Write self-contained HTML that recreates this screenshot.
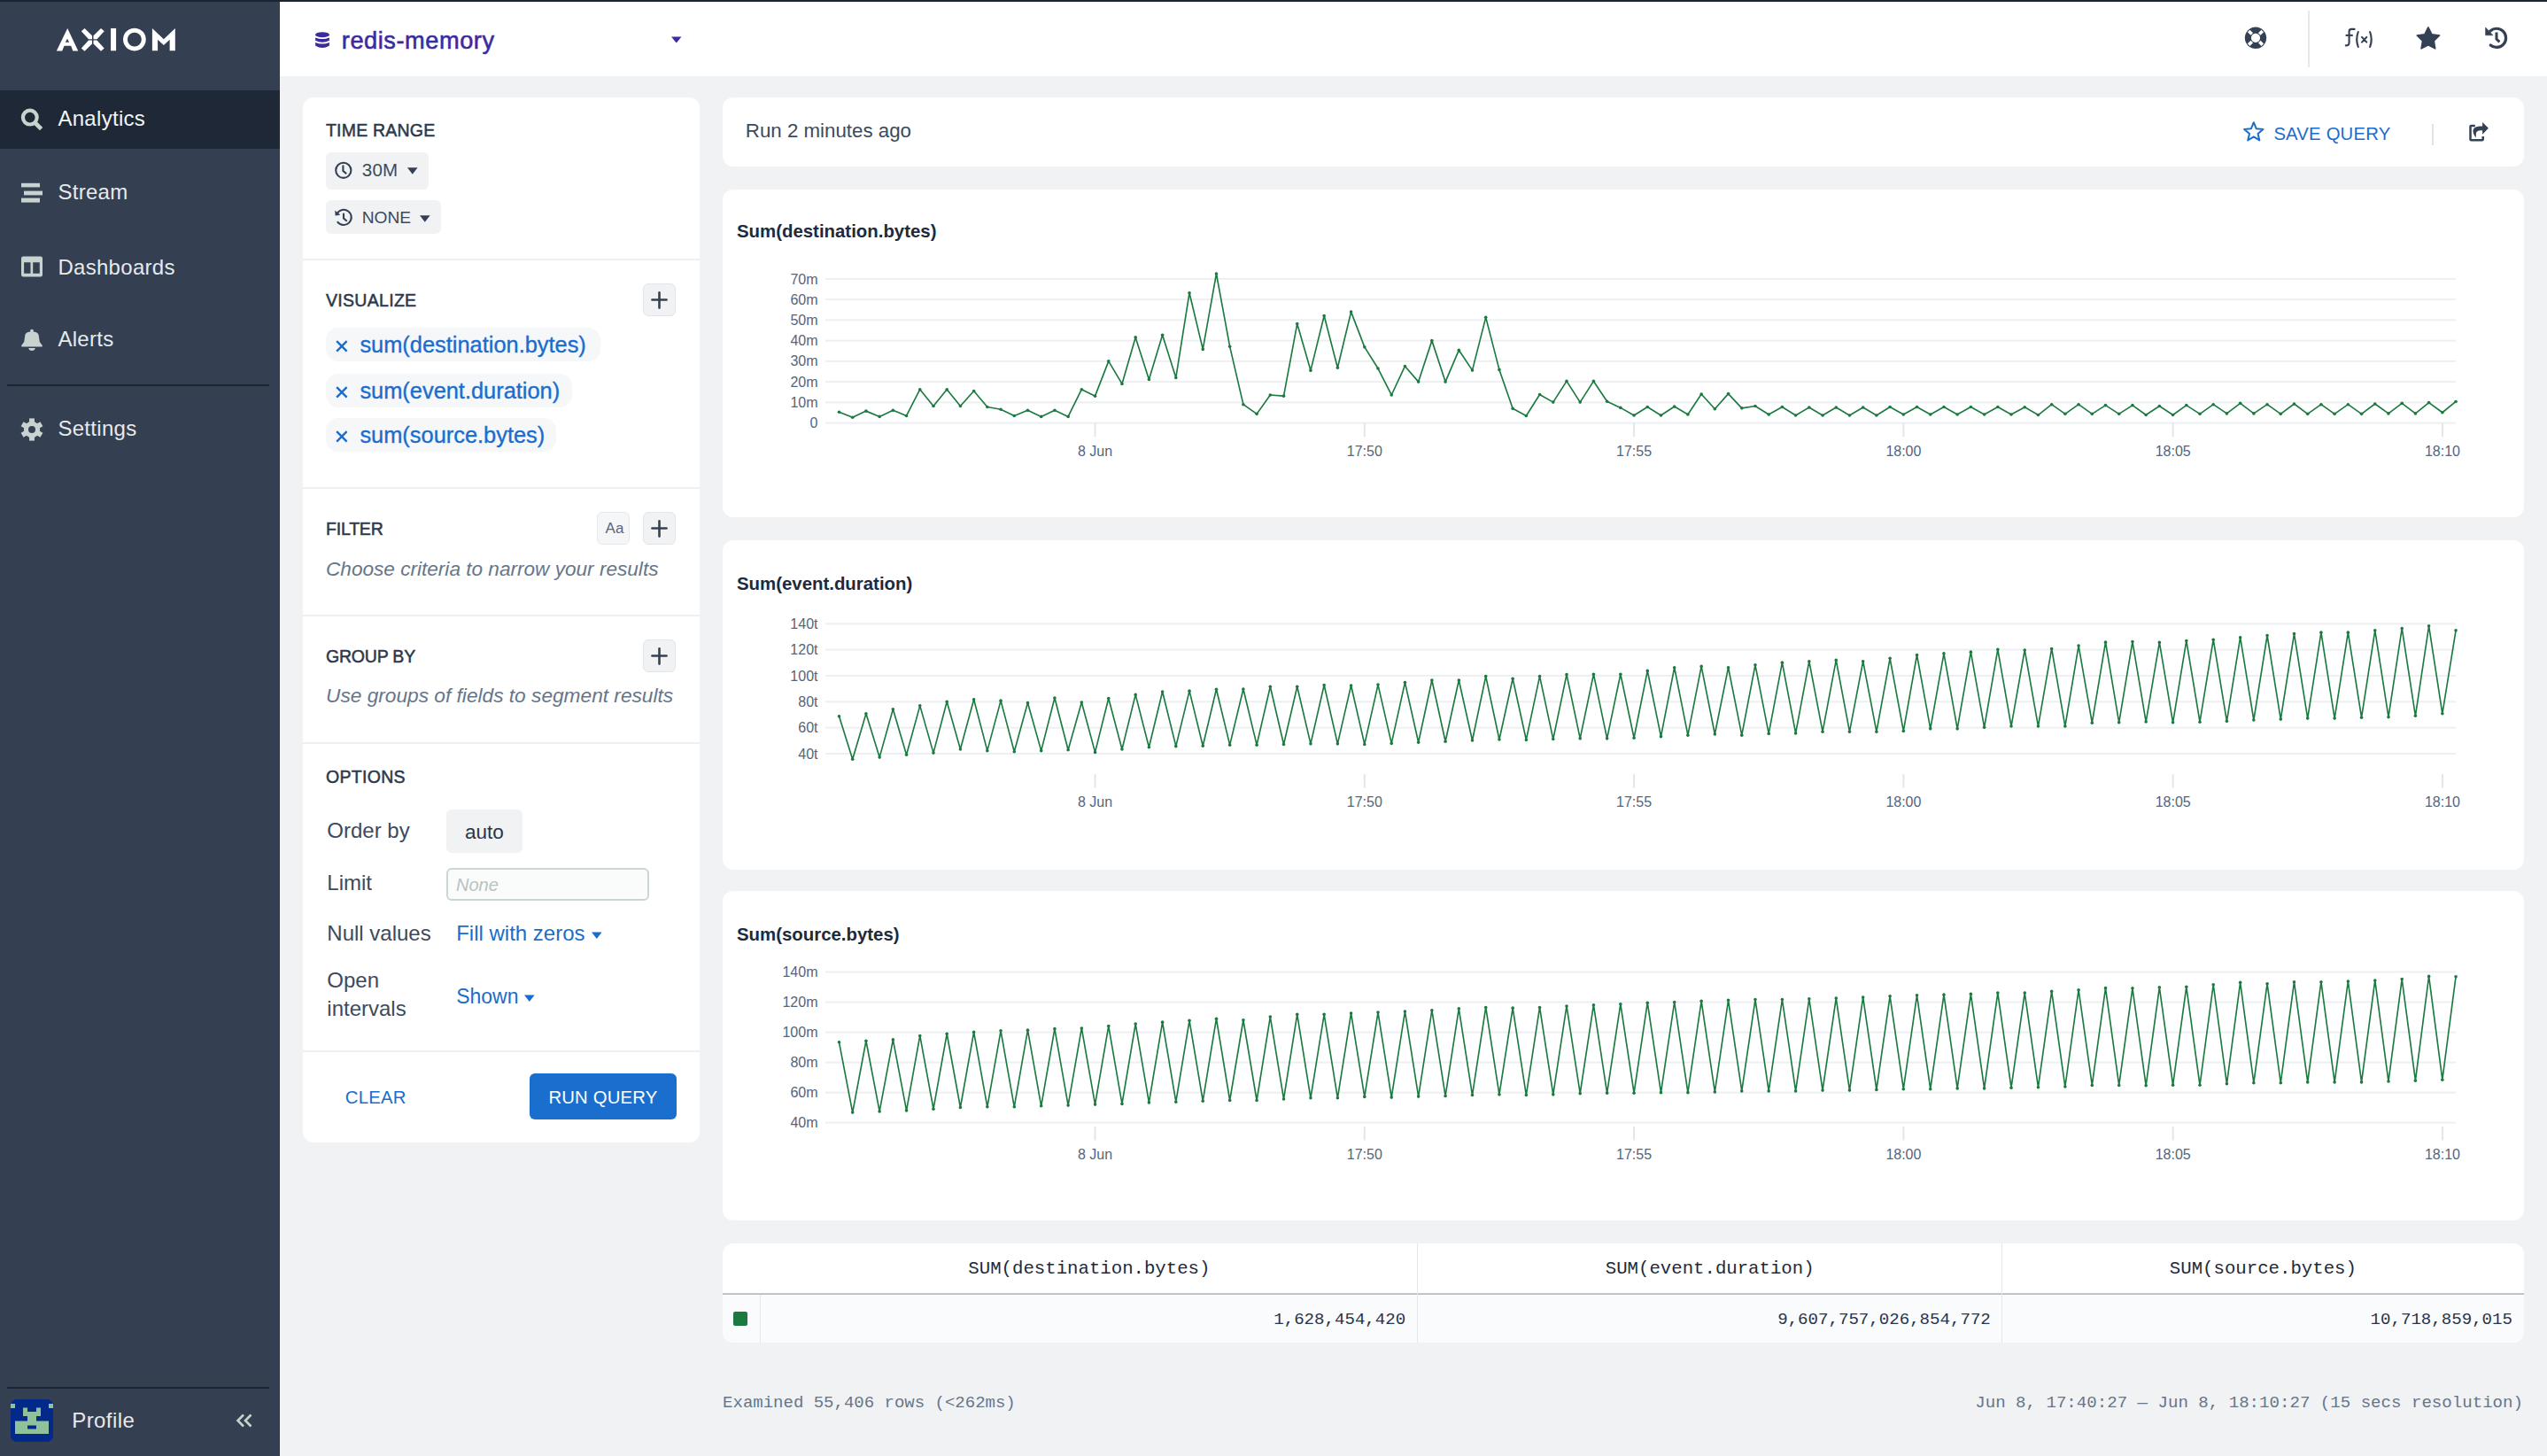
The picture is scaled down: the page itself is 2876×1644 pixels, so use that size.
<!DOCTYPE html><html><head><meta charset="utf-8"><style>
html,body{margin:0;padding:0;}body{width:2876px;height:1644px;position:relative;overflow:hidden;background:#f1f2f4;font-family:'Liberation Sans', sans-serif;}
.t{position:absolute;white-space:pre;}.r{position:absolute;}svg{position:absolute;overflow:visible;}
</style></head><body>
<div class="r" style="left:0px;top:0px;width:316px;height:1644px;background:#343f52;"></div>
<div class="r" style="left:0px;top:0px;width:2876px;height:2px;background:#1c2431;"></div>
<svg style="left:55px;top:25px" width="150" height="40" viewBox="0 0 2547 679"><g fill="#ffffff"><path d="M150,550 L360,118 L565,550 L463,550 L428,452 L298,452 L258,550 Z M320,385 L356,318 L393,385 Z" fill-rule="evenodd"/><path d="M625,175 L688,118 L832,258 L832,325 L765,325 Z"/><path d="M1065,175 L1002,118 L858,258 L858,325 L925,325 Z"/><path d="M625,500 L688,557 L832,418 L832,350 L765,350 Z"/><path d="M1065,500 L1002,557 L858,418 L858,350 L925,350 Z"/><rect x="1190" y="118" width="102" height="430"/><path d="M1645,113 A219,219 0 1,0 1645.1,113 Z M1645,198 A134,134 0 1,1 1644.9,198 Z" fill-rule="evenodd"/><path d="M1985,548 L1985,120 L2205,325 L2425,120 L2425,548 L2320,548 L2320,335 L2205,440 L2090,335 L2090,548 Z"/></g></svg>
<div class="r" style="left:0px;top:102px;width:316px;height:66px;background:#1f2836;"></div>
<svg style="left:24px;top:122px" width="26" height="27" viewBox="0 0 26 27"><circle cx="9.8" cy="10.6" r="7.9" fill="none" stroke="#c8d2cf" stroke-width="4.2"/><path d="M15.2,16.2 L22.6,23.6" stroke="#c8d2cf" stroke-width="4.8"/></svg>
<div class="t" style="left:65.40px;top:120.57px;font-size:24px;line-height:26.81px;color:#f3f5f6;font-family:'Liberation Sans', sans-serif;letter-spacing:0.3px;">Analytics</div>
<svg style="left:24px;top:206px" width="25" height="24" viewBox="0 0 25 24"><rect x="0" y="0.8" width="21" height="4.6" fill="#c8d2cf"/><rect x="3" y="9.6" width="21" height="4.8" fill="#c8d2cf"/><rect x="0" y="17.6" width="21" height="5.0" fill="#c8d2cf"/></svg>
<div class="t" style="left:65.40px;top:204.27px;font-size:24px;line-height:26.81px;color:#e6eaec;font-family:'Liberation Sans', sans-serif;letter-spacing:0.3px;">Stream</div>
<svg style="left:24px;top:289px" width="25" height="25" viewBox="0 0 25 25"><path d="M2.2,0.6 L21.8,0.6 Q24,0.6 24,2.8 L24,21.2 Q24,23.4 21.8,23.4 L2.2,23.4 Q0,23.4 0,21.2 L0,2.8 Q0,0.6 2.2,0.6 Z M3.1,7.2 L3.1,19.8 L10.5,19.8 L10.5,7.2 Z M13.2,7.2 L13.2,19.8 L20.8,19.8 L20.8,7.2 Z" fill="#c8d2cf" fill-rule="evenodd"/></svg>
<div class="t" style="left:65.40px;top:288.67px;font-size:24px;line-height:26.81px;color:#e6eaec;font-family:'Liberation Sans', sans-serif;letter-spacing:0.3px;">Dashboards</div>
<svg style="left:24px;top:371px" width="25" height="26" viewBox="0 0 25 26"><circle cx="12" cy="2.6" r="1.9" fill="#c8d2cf"/><path d="M4.2,8.2 C4.4,5 7.6,3.6 12,3.6 C16.4,3.6 19.6,5 19.8,8.2 L20.8,14.9 L23.9,19.2 Q24.2,20.4 23,20.4 L1,20.4 Q-0.2,20.4 0.1,19.2 L3.2,14.9 Z" fill="#c8d2cf"/><path d="M8.3,22 L15.7,22 C15.7,23.8 14,25 12,25 C10,25 8.3,23.8 8.3,22 Z" fill="#c8d2cf"/></svg>
<div class="t" style="left:65.40px;top:370.37px;font-size:24px;line-height:26.81px;color:#e6eaec;font-family:'Liberation Sans', sans-serif;letter-spacing:0.3px;">Alerts</div>
<div class="r" style="left:8px;top:434px;width:296px;height:2px;background:#1d2532;"></div>
<svg style="left:24px;top:472px" width="25" height="26" viewBox="0 0 25 26"><g fill="#c8d2cf"><circle cx="12" cy="13" r="9.2"/><rect x="9.05" y="0.4" width="5.9" height="7" transform="rotate(0 12 13)"/><rect x="9.05" y="0.4" width="5.9" height="7" transform="rotate(60 12 13)"/><rect x="9.05" y="0.4" width="5.9" height="7" transform="rotate(120 12 13)"/><rect x="9.05" y="0.4" width="5.9" height="7" transform="rotate(180 12 13)"/><rect x="9.05" y="0.4" width="5.9" height="7" transform="rotate(240 12 13)"/><rect x="9.05" y="0.4" width="5.9" height="7" transform="rotate(300 12 13)"/></g><circle cx="12" cy="13" r="4.0" fill="#343f52"/></svg>
<div class="t" style="left:65.40px;top:470.97px;font-size:24px;line-height:26.81px;color:#e6eaec;font-family:'Liberation Sans', sans-serif;letter-spacing:0.3px;">Settings</div>
<div class="r" style="left:8px;top:1566px;width:296px;height:2px;background:#1d2532;"></div>
<svg style="left:12px;top:1580px" width="48" height="48" viewBox="0 0 48 48"><rect x="0" y="0" width="48" height="48" rx="7" fill="#032a8a"/><g fill="#8fc29a"><rect x="0" y="5" width="5" height="5"/><rect x="43" y="5" width="5" height="5"/><rect x="14" y="9.5" width="5" height="5"/><rect x="29" y="9.5" width="5" height="5"/><rect x="14" y="14" width="20" height="5"/><rect x="19" y="19" width="10" height="6"/><rect x="5" y="24.5" width="38" height="14.5"/></g><rect x="19" y="29.5" width="10" height="4" fill="#032a8a"/></svg>
<div class="t" style="left:81.30px;top:1591.07px;font-size:24px;line-height:26.81px;color:#e6eaec;font-family:'Liberation Sans', sans-serif;letter-spacing:0.4px;">Profile</div>
<svg style="left:266px;top:1596px" width="20" height="16" viewBox="0 0 20 16"><path d="M9,1.5 L2.5,8 L9,14.5 M17.5,1.5 L11,8 L17.5,14.5" fill="none" stroke="#c8d2cf" stroke-width="2.6"/></svg>
<div class="r" style="left:316px;top:2px;width:2560px;height:84px;background:#ffffff;"></div>
<svg style="left:355px;top:35px" width="18" height="20" viewBox="0 0 18 20"><g fill="#3a2b9e"><ellipse cx="9" cy="4.2" rx="7.9" ry="3.0"/><path d="M1.1,7.4 Q9,10.6 16.9,7.4 L16.9,10.7 Q9,14.7 1.1,10.7 Z"/><path d="M1.1,12.9 Q9,16.3 16.9,12.9 L16.9,16.4 Q9,21.4 1.1,16.4 Z"/></g></svg>
<div class="t" style="left:385.80px;top:30.88px;font-size:27.2px;line-height:30.39px;color:#3a2b9e;font-family:'Liberation Sans', sans-serif;letter-spacing:0.55px;-webkit-text-stroke:0.55px #3a2b9e;">redis-memory</div>
<svg style="left:758px;top:41px" width="12" height="8" viewBox="0 0 12 8"><path d="M0,0.5 L11.5,0.5 L5.75,7.5 Z" fill="#3a2b9e"/></svg>
<svg style="left:2526px;top:22px" width="42" height="42" viewBox="0 0 42 42"><circle cx="21" cy="20.8" r="12.2" fill="#344154"/><circle cx="21" cy="20.8" r="5.1" fill="#fff"/><g fill="#fff"><rect x="19.15" y="9.8" width="3.7" height="5" transform="rotate(45 21 20.8)"/><rect x="19.15" y="9.8" width="3.7" height="5" transform="rotate(135 21 20.8)"/><rect x="19.15" y="9.8" width="3.7" height="5" transform="rotate(225 21 20.8)"/><rect x="19.15" y="9.8" width="3.7" height="5" transform="rotate(315 21 20.8)"/></g></svg>
<div class="r" style="left:2606px;top:12px;width:2px;height:64px;background:#e6e8eb;"></div>
<svg style="left:2640px;top:22px" width="42" height="40" viewBox="0 0 42 40"><g fill="none" stroke="#344154" stroke-width="2.1" stroke-linecap="round"><path d="M18.6,10.9 L15.2,10.9 C13.5,10.9 12.6,11.9 12.6,13.6 L12.6,26.2 C12.6,28.4 11.2,29.4 8.8,29.4"/><path d="M8.6,17.9 L16.8,17.9" stroke-linecap="butt"/><path d="M22.8,14.0 Q19.6,22.5 22.8,31.0"/><path d="M36.1,14.0 Q39.3,22.5 36.1,31.0"/><path d="M27.0,19.9 L32.3,25.6 M32.3,19.9 L27.0,25.6"/></g></svg>
<svg style="left:2728px;top:29px" width="28" height="28" viewBox="0 0 28 28"><path d="M13.90,1.80 L17.84,9.68 L26.55,10.99 L20.27,17.17 L21.72,25.86 L13.90,21.80 L6.08,25.86 L7.53,17.17 L1.25,10.99 L9.96,9.68 Z" fill="#344154" stroke="#344154" stroke-width="1.6" stroke-linejoin="round"/></svg>
<svg style="left:2798px;top:22px" width="40" height="40" viewBox="0 0 40 40"><path d="M13.9,13.0 A10.6,10.6 0 1,1 14.2,29.0" fill="none" stroke="#344154" stroke-width="3.2" stroke-linecap="round"/><path d="M8.6,9.1 L8.6,17.8 L17.0,17.8 Z" fill="#344154" stroke="#344154" stroke-width="0.6" stroke-linejoin="round"/><path d="M21,14.6 L21,22.2 L24.4,25.4" fill="none" stroke="#344154" stroke-width="3"/></svg>
<div class="r" style="left:342px;top:110px;width:448px;height:1180px;background:#ffffff;border-radius:12px;"></div>
<div class="t" style="left:368.00px;top:136.55px;font-size:19.5px;line-height:21.79px;color:#2b384b;font-family:'Liberation Sans', sans-serif;letter-spacing:0.2px;-webkit-text-stroke:0.5px #2b384b;">TIME RANGE</div>
<div class="r" style="left:368px;top:172px;width:116px;height:42px;background:#f0f2f4;border-radius:6px;"></div>
<svg style="left:377px;top:182px" width="22" height="21" viewBox="0 0 22 21"><circle cx="10.8" cy="10.3" r="8.6" fill="none" stroke="#344154" stroke-width="2.1"/><path d="M10.4,5.4 L10.4,11 L13.6,13.6" fill="none" stroke="#344154" stroke-width="2.1" stroke-linecap="round"/></svg>
<div class="t" style="left:408.70px;top:181.44px;font-size:20.5px;line-height:22.90px;color:#3c4a5d;font-family:'Liberation Sans', sans-serif;letter-spacing:0.3px;">30M</div>
<svg style="left:460px;top:189px" width="12" height="8" viewBox="0 0 12 8"><path d="M0,0.3 L11.6,0.3 L5.8,7.8 Z" fill="#344154"/></svg>
<div class="r" style="left:368px;top:226px;width:130px;height:38px;background:#f0f2f4;border-radius:6px;"></div>
<svg style="left:377px;top:235px" width="22" height="22" viewBox="0 0 22 22"><path d="M3.6,6.2 A8.6,8.6 0 1,1 4.4,15.8" fill="none" stroke="#344154" stroke-width="2.1" stroke-linecap="round"/><path d="M1.2,2.4 L1.6,8.4 L7.4,7.8 Z" fill="#344154"/><path d="M11,6.6 L11,11.6 L14.2,14.2" fill="none" stroke="#344154" stroke-width="2.1" stroke-linecap="round"/></svg>
<div class="t" style="left:408.70px;top:234.92px;font-size:19.2px;line-height:21.45px;color:#3c4a5d;font-family:'Liberation Sans', sans-serif;">NONE</div>
<svg style="left:474px;top:243px" width="12" height="8" viewBox="0 0 12 8"><path d="M0,0.3 L11.6,0.3 L5.8,7.8 Z" fill="#344154"/></svg>
<div class="r" style="left:342px;top:292px;width:448px;height:2px;background:#edf0f3;"></div>
<div class="t" style="left:368.00px;top:328.65px;font-size:19.5px;line-height:21.79px;color:#2b384b;font-family:'Liberation Sans', sans-serif;letter-spacing:0.3px;-webkit-text-stroke:0.5px #2b384b;">VISUALIZE</div>
<div class="r" style="left:726px;top:320px;width:37px;height:37px;background:#f0f2f4;border-radius:6px;box-sizing:border-box;border:1px solid #e2e5e9;"></div>
<svg style="left:735px;top:329px" width="19" height="19" viewBox="0 0 19 19"><path d="M9.5,1.4 L9.5,18.6 M1.4,9.5 L17.6,9.5" stroke="#344154" stroke-width="2.6" stroke-linecap="round"/></svg>
<div class="r" style="left:368px;top:370px;width:310px;height:38px;background:#f5f7f9;border-radius:14px;"></div>
<svg style="left:379px;top:383.5px" width="14" height="14" viewBox="0 0 14 14"><path d="M1.2,1.2 L12.6,12.6 M12.6,1.2 L1.2,12.6" stroke="#1a6dcc" stroke-width="2.4"/></svg>
<div class="t" style="left:406.40px;top:374.61px;font-size:25.4px;line-height:28.38px;color:#1a6dcc;font-family:'Liberation Sans', sans-serif;-webkit-text-stroke:0.35px #1a6dcc;">sum(destination.bytes)</div>
<div class="r" style="left:368px;top:422px;width:278px;height:38px;background:#f5f7f9;border-radius:14px;"></div>
<svg style="left:379px;top:435.5px" width="14" height="14" viewBox="0 0 14 14"><path d="M1.2,1.2 L12.6,12.6 M12.6,1.2 L1.2,12.6" stroke="#1a6dcc" stroke-width="2.4"/></svg>
<div class="t" style="left:406.40px;top:426.61px;font-size:25.4px;line-height:28.38px;color:#1a6dcc;font-family:'Liberation Sans', sans-serif;-webkit-text-stroke:0.35px #1a6dcc;">sum(event.duration)</div>
<div class="r" style="left:368px;top:472px;width:260px;height:38px;background:#f5f7f9;border-radius:14px;"></div>
<svg style="left:379px;top:485.5px" width="14" height="14" viewBox="0 0 14 14"><path d="M1.2,1.2 L12.6,12.6 M12.6,1.2 L1.2,12.6" stroke="#1a6dcc" stroke-width="2.4"/></svg>
<div class="t" style="left:406.40px;top:476.61px;font-size:25.4px;line-height:28.38px;color:#1a6dcc;font-family:'Liberation Sans', sans-serif;-webkit-text-stroke:0.35px #1a6dcc;">sum(source.bytes)</div>
<div class="r" style="left:342px;top:550px;width:448px;height:2px;background:#edf0f3;"></div>
<div class="t" style="left:368.00px;top:586.95px;font-size:19.5px;line-height:21.79px;color:#2b384b;font-family:'Liberation Sans', sans-serif;letter-spacing:-0.2px;-webkit-text-stroke:0.5px #2b384b;">FILTER</div>
<div class="r" style="left:674px;top:578px;width:37px;height:37px;background:#f5f6f8;border-radius:6px;box-sizing:border-box;border:1px solid #e6e9ec;"></div>
<div class="t" style="left:675.50px;top:587.41px;font-size:17px;line-height:18.99px;color:#56667b;font-family:'Liberation Sans', sans-serif;text-align:center;width:37px;">Aa</div>
<div class="r" style="left:726px;top:578px;width:37px;height:37px;background:#f0f2f4;border-radius:6px;box-sizing:border-box;border:1px solid #e2e5e9;"></div>
<svg style="left:735px;top:587px" width="19" height="19" viewBox="0 0 19 19"><path d="M9.5,1.4 L9.5,18.6 M1.4,9.5 L17.6,9.5" stroke="#344154" stroke-width="2.6" stroke-linecap="round"/></svg>
<div class="t" style="left:368.00px;top:629.84px;font-size:22.6px;line-height:25.25px;color:#66768a;font-family:'Liberation Sans', sans-serif;font-style:italic;">Choose criteria to narrow your results</div>
<div class="r" style="left:342px;top:694px;width:448px;height:2px;background:#edf0f3;"></div>
<div class="t" style="left:368.00px;top:730.75px;font-size:19.5px;line-height:21.79px;color:#2b384b;font-family:'Liberation Sans', sans-serif;letter-spacing:-0.2px;-webkit-text-stroke:0.5px #2b384b;">GROUP BY</div>
<div class="r" style="left:726px;top:722px;width:37px;height:37px;background:#f0f2f4;border-radius:6px;box-sizing:border-box;border:1px solid #e2e5e9;"></div>
<svg style="left:735px;top:731px" width="19" height="19" viewBox="0 0 19 19"><path d="M9.5,1.4 L9.5,18.6 M1.4,9.5 L17.6,9.5" stroke="#344154" stroke-width="2.6" stroke-linecap="round"/></svg>
<div class="t" style="left:368.00px;top:773.45px;font-size:22.7px;line-height:25.36px;color:#66768a;font-family:'Liberation Sans', sans-serif;font-style:italic;">Use groups of fields to segment results</div>
<div class="r" style="left:342px;top:838px;width:448px;height:2px;background:#edf0f3;"></div>
<div class="t" style="left:368.00px;top:867.15px;font-size:19.5px;line-height:21.79px;color:#2b384b;font-family:'Liberation Sans', sans-serif;letter-spacing:0.3px;-webkit-text-stroke:0.5px #2b384b;">OPTIONS</div>
<div class="t" style="left:369.30px;top:924.87px;font-size:24px;line-height:26.81px;color:#3c4a5d;font-family:'Liberation Sans', sans-serif;">Order by</div>
<div class="r" style="left:504px;top:914px;width:86px;height:49px;background:#f0f2f4;border-radius:6px;"></div>
<div class="t" style="left:504.00px;top:927.43px;font-size:22.5px;line-height:25.14px;color:#2a3546;font-family:'Liberation Sans', sans-serif;text-align:center;width:86px;">auto</div>
<div class="t" style="left:369.30px;top:984.27px;font-size:24px;line-height:26.81px;color:#3c4a5d;font-family:'Liberation Sans', sans-serif;">Limit</div>
<div class="r" style="left:504.4px;top:980px;width:229px;height:37px;background:#fafbfb;border-radius:6px;box-sizing:border-box;border:2px solid #c9d6d2;"></div>
<div class="t" style="left:515.00px;top:987.89px;font-size:20px;line-height:22.34px;color:#b7c3c1;font-family:'Liberation Sans', sans-serif;font-style:italic;">None</div>
<div class="t" style="left:369.30px;top:1041.27px;font-size:24px;line-height:26.81px;color:#3c4a5d;font-family:'Liberation Sans', sans-serif;">Null values</div>
<div class="t" style="left:515.20px;top:1041.27px;font-size:24px;line-height:26.81px;color:#1a6dcc;font-family:'Liberation Sans', sans-serif;">Fill with zeros</div>
<svg style="left:668px;top:1052px" width="12" height="9" viewBox="0 0 12 9"><path d="M0,0.5 L11.6,0.5 L5.8,8 Z" fill="#1a6dcc"/></svg>
<div class="t" style="left:369.30px;top:1094.27px;font-size:24px;line-height:26.81px;color:#3c4a5d;font-family:'Liberation Sans', sans-serif;">Open</div>
<div class="t" style="left:369.30px;top:1126.07px;font-size:24px;line-height:26.81px;color:#3c4a5d;font-family:'Liberation Sans', sans-serif;">intervals</div>
<div class="t" style="left:515.20px;top:1112.58px;font-size:23px;line-height:25.70px;color:#1a6dcc;font-family:'Liberation Sans', sans-serif;">Shown</div>
<svg style="left:592px;top:1123px" width="12" height="9" viewBox="0 0 12 9"><path d="M0,0.5 L11.6,0.5 L5.8,8 Z" fill="#1a6dcc"/></svg>
<div class="r" style="left:342px;top:1186px;width:448px;height:2px;background:#edf0f3;"></div>
<div class="t" style="left:389.70px;top:1227.62px;font-size:20.3px;line-height:22.68px;color:#1a6dcc;font-family:'Liberation Sans', sans-serif;letter-spacing:0.3px;">CLEAR</div>
<div class="r" style="left:598px;top:1212px;width:166px;height:52px;background:#1a6fce;border-radius:6px;"></div>
<div class="t" style="left:598.00px;top:1227.62px;font-size:20.3px;line-height:22.68px;color:#ffffff;font-family:'Liberation Sans', sans-serif;letter-spacing:0.2px;text-align:center;width:166px;">RUN QUERY</div>
<div class="r" style="left:816px;top:110px;width:2034px;height:78px;background:#ffffff;border-radius:12px;"></div>
<div class="t" style="left:841.80px;top:136.01px;font-size:22.3px;line-height:24.91px;color:#3c4a5d;font-family:'Liberation Sans', sans-serif;">Run 2 minutes ago</div>
<svg style="left:2533px;top:136px" width="24" height="25" viewBox="0 0 24 25"><path d="M11.80,2.20 L14.74,9.35 L22.45,9.94 L16.56,14.95 L18.38,22.46 L11.80,18.40 L5.22,22.46 L7.04,14.95 L1.15,9.94 L8.86,9.35 Z" fill="none" stroke="#1a6dcc" stroke-width="2" stroke-linejoin="round"/></svg>
<div class="t" style="left:2567.40px;top:139.92px;font-size:20.3px;line-height:22.68px;color:#1a6dcc;font-family:'Liberation Sans', sans-serif;letter-spacing:0.2px;">SAVE QUERY</div>
<div class="r" style="left:2746px;top:140px;width:2px;height:24px;background:#dfe3e6;"></div>
<svg style="left:2780px;top:130px" width="40" height="40" viewBox="0 0 40 40"><path d="M14.8,12.0 L10.4,12.0 Q9.5,12.0 9.5,12.9 L9.5,27.4 Q9.5,28.3 10.4,28.3 L22.8,28.3 Q23.7,28.3 23.7,27.4 L23.7,23.9" fill="none" stroke="#344154" stroke-width="2.5"/><path d="M23.1,8.0 L29.9,14.8 L23.1,21.7 L23.1,17.3 C19.4,17.3 16.6,17.6 15.9,20.6 L15.7,25.6 C13.4,22.4 12.2,19.4 12.5,17.4 C13.2,13.6 16.4,12.4 23.1,12.4 Z" fill="#344154"/></svg>
<div class="r" style="left:816px;top:214px;width:2034px;height:370px;background:#ffffff;border-radius:12px;"></div>
<div class="r" style="left:816px;top:610px;width:2034px;height:372px;background:#ffffff;border-radius:12px;"></div>
<div class="r" style="left:816px;top:1006px;width:2034px;height:372px;background:#ffffff;border-radius:12px;"></div>
<div class="t" style="left:832.00px;top:249.73px;font-size:20.4px;line-height:22.79px;color:#1e2a3b;font-family:'Liberation Sans', sans-serif;font-weight:700;">Sum(destination.bytes)</div>
<svg style="left:0;top:0" width="2876" height="1644" viewBox="0 0 2876 1644" font-family="Liberation Sans, sans-serif"><rect x="932" y="476.60" width="1841" height="2" fill="#edeff1"/><text x="923.5" y="483.20" text-anchor="end" font-size="16" fill="#55657a">0</text><rect x="932" y="453.36" width="1841" height="2" fill="#edeff1"/><text x="923.5" y="459.96" text-anchor="end" font-size="16" fill="#55657a">10m</text><rect x="932" y="430.11" width="1841" height="2" fill="#edeff1"/><text x="923.5" y="436.71" text-anchor="end" font-size="16" fill="#55657a">20m</text><rect x="932" y="406.87" width="1841" height="2" fill="#edeff1"/><text x="923.5" y="413.47" text-anchor="end" font-size="16" fill="#55657a">30m</text><rect x="932" y="383.63" width="1841" height="2" fill="#edeff1"/><text x="923.5" y="390.23" text-anchor="end" font-size="16" fill="#55657a">40m</text><rect x="932" y="360.38" width="1841" height="2" fill="#edeff1"/><text x="923.5" y="366.99" text-anchor="end" font-size="16" fill="#55657a">50m</text><rect x="932" y="337.14" width="1841" height="2" fill="#edeff1"/><text x="923.5" y="343.74" text-anchor="end" font-size="16" fill="#55657a">60m</text><rect x="932" y="313.90" width="1841" height="2" fill="#edeff1"/><text x="923.5" y="320.50" text-anchor="end" font-size="16" fill="#55657a">70m</text><rect x="1235.50" y="477.6" width="2" height="15.6" fill="#e3e6e9"/><text x="1236.50" y="514.9" text-anchor="middle" font-size="16" fill="#55657a">8 Jun</text><rect x="1539.80" y="477.6" width="2" height="15.6" fill="#e3e6e9"/><text x="1540.80" y="514.9" text-anchor="middle" font-size="16" fill="#55657a">17:50</text><rect x="1844.10" y="477.6" width="2" height="15.6" fill="#e3e6e9"/><text x="1845.10" y="514.9" text-anchor="middle" font-size="16" fill="#55657a">17:55</text><rect x="2148.40" y="477.6" width="2" height="15.6" fill="#e3e6e9"/><text x="2149.40" y="514.9" text-anchor="middle" font-size="16" fill="#55657a">18:00</text><rect x="2452.70" y="477.6" width="2" height="15.6" fill="#e3e6e9"/><text x="2453.70" y="514.9" text-anchor="middle" font-size="16" fill="#55657a">18:05</text><rect x="2757.00" y="477.6" width="2" height="15.6" fill="#e3e6e9"/><text x="2758.00" y="514.9" text-anchor="middle" font-size="16" fill="#55657a">18:10</text><path d="M947.50,465.28 L962.71,471.32 L977.93,464.12 L993.14,470.39 L1008.35,463.19 L1023.57,469.46 L1038.78,439.71 L1053.99,458.54 L1069.20,439.71 L1084.42,458.54 L1099.63,441.57 L1114.84,459.47 L1130.06,462.26 L1145.27,469.46 L1160.48,463.19 L1175.69,470.39 L1190.91,463.19 L1206.12,470.39 L1221.33,439.71 L1236.55,447.15 L1251.76,407.87 L1266.97,433.44 L1282.19,380.91 L1297.40,428.56 L1312.61,378.35 L1327.83,426.47 L1343.04,330.70 L1358.25,394.39 L1373.46,309.09 L1388.68,391.37 L1403.89,456.68 L1419.10,467.37 L1434.32,445.99 L1449.53,447.15 L1464.74,365.57 L1479.95,418.33 L1495.17,356.50 L1510.38,415.31 L1525.59,352.09 L1540.81,391.83 L1556.02,416.01 L1571.23,445.99 L1586.45,413.45 L1601.66,431.11 L1616.87,384.63 L1632.09,431.11 L1647.30,395.32 L1662.51,418.10 L1677.72,358.36 L1692.94,417.40 L1708.15,461.33 L1723.36,469.46 L1738.58,445.52 L1753.79,454.12 L1769.00,430.42 L1784.21,454.12 L1799.43,430.42 L1814.64,453.19 L1829.85,460.40 L1845.07,469.00 L1860.28,459.47 L1875.49,469.00 L1890.71,459.01 L1905.92,468.07 L1921.13,445.06 L1936.34,461.79 L1951.56,444.59 L1966.77,460.87 L1981.98,458.54 L1997.20,468.07 L2012.41,459.47 L2027.62,469.00 L2042.84,459.94 L2058.05,469.00 L2073.26,459.94 L2088.47,469.00 L2103.69,459.94 L2118.90,469.00 L2134.11,459.47 L2149.33,468.07 L2164.54,459.47 L2179.75,468.07 L2194.97,459.47 L2210.18,468.07 L2225.39,459.47 L2240.61,468.07 L2255.82,459.47 L2271.03,468.07 L2286.24,459.70 L2301.46,468.54 L2316.67,456.68 L2331.88,467.37 L2347.10,456.68 L2362.31,467.37 L2377.52,457.61 L2392.73,467.37 L2407.95,457.61 L2423.16,468.54 L2438.37,458.54 L2453.59,468.54 L2468.80,457.61 L2484.01,467.37 L2499.23,456.68 L2514.44,466.91 L2529.65,455.29 L2544.86,466.91 L2560.08,456.68 L2575.29,467.37 L2590.50,455.98 L2605.72,467.37 L2620.93,456.68 L2636.14,467.37 L2651.36,456.68 L2666.57,467.37 L2681.78,455.98 L2696.99,466.91 L2712.21,455.29 L2727.42,466.91 L2742.63,454.59 L2757.85,465.75 L2773.06,453.43" fill="none" stroke="#1c7a41" stroke-width="1.65" stroke-linejoin="round"/><g fill="#1c7a41"><circle cx="947.50" cy="465.28" r="1.8"/><circle cx="962.71" cy="471.32" r="1.8"/><circle cx="977.93" cy="464.12" r="1.8"/><circle cx="993.14" cy="470.39" r="1.8"/><circle cx="1008.35" cy="463.19" r="1.8"/><circle cx="1023.57" cy="469.46" r="1.8"/><circle cx="1038.78" cy="439.71" r="1.8"/><circle cx="1053.99" cy="458.54" r="1.8"/><circle cx="1069.20" cy="439.71" r="1.8"/><circle cx="1084.42" cy="458.54" r="1.8"/><circle cx="1099.63" cy="441.57" r="1.8"/><circle cx="1114.84" cy="459.47" r="1.8"/><circle cx="1130.06" cy="462.26" r="1.8"/><circle cx="1145.27" cy="469.46" r="1.8"/><circle cx="1160.48" cy="463.19" r="1.8"/><circle cx="1175.69" cy="470.39" r="1.8"/><circle cx="1190.91" cy="463.19" r="1.8"/><circle cx="1206.12" cy="470.39" r="1.8"/><circle cx="1221.33" cy="439.71" r="1.8"/><circle cx="1236.55" cy="447.15" r="1.8"/><circle cx="1251.76" cy="407.87" r="1.8"/><circle cx="1266.97" cy="433.44" r="1.8"/><circle cx="1282.19" cy="380.91" r="1.8"/><circle cx="1297.40" cy="428.56" r="1.8"/><circle cx="1312.61" cy="378.35" r="1.8"/><circle cx="1327.83" cy="426.47" r="1.8"/><circle cx="1343.04" cy="330.70" r="1.8"/><circle cx="1358.25" cy="394.39" r="1.8"/><circle cx="1373.46" cy="309.09" r="1.8"/><circle cx="1388.68" cy="391.37" r="1.8"/><circle cx="1403.89" cy="456.68" r="1.8"/><circle cx="1419.10" cy="467.37" r="1.8"/><circle cx="1434.32" cy="445.99" r="1.8"/><circle cx="1449.53" cy="447.15" r="1.8"/><circle cx="1464.74" cy="365.57" r="1.8"/><circle cx="1479.95" cy="418.33" r="1.8"/><circle cx="1495.17" cy="356.50" r="1.8"/><circle cx="1510.38" cy="415.31" r="1.8"/><circle cx="1525.59" cy="352.09" r="1.8"/><circle cx="1540.81" cy="391.83" r="1.8"/><circle cx="1556.02" cy="416.01" r="1.8"/><circle cx="1571.23" cy="445.99" r="1.8"/><circle cx="1586.45" cy="413.45" r="1.8"/><circle cx="1601.66" cy="431.11" r="1.8"/><circle cx="1616.87" cy="384.63" r="1.8"/><circle cx="1632.09" cy="431.11" r="1.8"/><circle cx="1647.30" cy="395.32" r="1.8"/><circle cx="1662.51" cy="418.10" r="1.8"/><circle cx="1677.72" cy="358.36" r="1.8"/><circle cx="1692.94" cy="417.40" r="1.8"/><circle cx="1708.15" cy="461.33" r="1.8"/><circle cx="1723.36" cy="469.46" r="1.8"/><circle cx="1738.58" cy="445.52" r="1.8"/><circle cx="1753.79" cy="454.12" r="1.8"/><circle cx="1769.00" cy="430.42" r="1.8"/><circle cx="1784.21" cy="454.12" r="1.8"/><circle cx="1799.43" cy="430.42" r="1.8"/><circle cx="1814.64" cy="453.19" r="1.8"/><circle cx="1829.85" cy="460.40" r="1.8"/><circle cx="1845.07" cy="469.00" r="1.8"/><circle cx="1860.28" cy="459.47" r="1.8"/><circle cx="1875.49" cy="469.00" r="1.8"/><circle cx="1890.71" cy="459.01" r="1.8"/><circle cx="1905.92" cy="468.07" r="1.8"/><circle cx="1921.13" cy="445.06" r="1.8"/><circle cx="1936.34" cy="461.79" r="1.8"/><circle cx="1951.56" cy="444.59" r="1.8"/><circle cx="1966.77" cy="460.87" r="1.8"/><circle cx="1981.98" cy="458.54" r="1.8"/><circle cx="1997.20" cy="468.07" r="1.8"/><circle cx="2012.41" cy="459.47" r="1.8"/><circle cx="2027.62" cy="469.00" r="1.8"/><circle cx="2042.84" cy="459.94" r="1.8"/><circle cx="2058.05" cy="469.00" r="1.8"/><circle cx="2073.26" cy="459.94" r="1.8"/><circle cx="2088.47" cy="469.00" r="1.8"/><circle cx="2103.69" cy="459.94" r="1.8"/><circle cx="2118.90" cy="469.00" r="1.8"/><circle cx="2134.11" cy="459.47" r="1.8"/><circle cx="2149.33" cy="468.07" r="1.8"/><circle cx="2164.54" cy="459.47" r="1.8"/><circle cx="2179.75" cy="468.07" r="1.8"/><circle cx="2194.97" cy="459.47" r="1.8"/><circle cx="2210.18" cy="468.07" r="1.8"/><circle cx="2225.39" cy="459.47" r="1.8"/><circle cx="2240.61" cy="468.07" r="1.8"/><circle cx="2255.82" cy="459.47" r="1.8"/><circle cx="2271.03" cy="468.07" r="1.8"/><circle cx="2286.24" cy="459.70" r="1.8"/><circle cx="2301.46" cy="468.54" r="1.8"/><circle cx="2316.67" cy="456.68" r="1.8"/><circle cx="2331.88" cy="467.37" r="1.8"/><circle cx="2347.10" cy="456.68" r="1.8"/><circle cx="2362.31" cy="467.37" r="1.8"/><circle cx="2377.52" cy="457.61" r="1.8"/><circle cx="2392.73" cy="467.37" r="1.8"/><circle cx="2407.95" cy="457.61" r="1.8"/><circle cx="2423.16" cy="468.54" r="1.8"/><circle cx="2438.37" cy="458.54" r="1.8"/><circle cx="2453.59" cy="468.54" r="1.8"/><circle cx="2468.80" cy="457.61" r="1.8"/><circle cx="2484.01" cy="467.37" r="1.8"/><circle cx="2499.23" cy="456.68" r="1.8"/><circle cx="2514.44" cy="466.91" r="1.8"/><circle cx="2529.65" cy="455.29" r="1.8"/><circle cx="2544.86" cy="466.91" r="1.8"/><circle cx="2560.08" cy="456.68" r="1.8"/><circle cx="2575.29" cy="467.37" r="1.8"/><circle cx="2590.50" cy="455.98" r="1.8"/><circle cx="2605.72" cy="467.37" r="1.8"/><circle cx="2620.93" cy="456.68" r="1.8"/><circle cx="2636.14" cy="467.37" r="1.8"/><circle cx="2651.36" cy="456.68" r="1.8"/><circle cx="2666.57" cy="467.37" r="1.8"/><circle cx="2681.78" cy="455.98" r="1.8"/><circle cx="2696.99" cy="466.91" r="1.8"/><circle cx="2712.21" cy="455.29" r="1.8"/><circle cx="2727.42" cy="466.91" r="1.8"/><circle cx="2742.63" cy="454.59" r="1.8"/><circle cx="2757.85" cy="465.75" r="1.8"/><circle cx="2773.06" cy="453.43" r="1.8"/></g></svg>
<div class="t" style="left:832.00px;top:647.93px;font-size:20.4px;line-height:22.79px;color:#1e2a3b;font-family:'Liberation Sans', sans-serif;font-weight:700;">Sum(event.duration)</div>
<svg style="left:0;top:0" width="2876" height="1644" viewBox="0 0 2876 1644" font-family="Liberation Sans, sans-serif"><rect x="932" y="850.00" width="1841" height="2" fill="#edeff1"/><text x="923.5" y="856.60" text-anchor="end" font-size="16" fill="#55657a">40t</text><rect x="932" y="820.66" width="1841" height="2" fill="#edeff1"/><text x="923.5" y="827.26" text-anchor="end" font-size="16" fill="#55657a">60t</text><rect x="932" y="791.32" width="1841" height="2" fill="#edeff1"/><text x="923.5" y="797.92" text-anchor="end" font-size="16" fill="#55657a">80t</text><rect x="932" y="761.98" width="1841" height="2" fill="#edeff1"/><text x="923.5" y="768.58" text-anchor="end" font-size="16" fill="#55657a">100t</text><rect x="932" y="732.64" width="1841" height="2" fill="#edeff1"/><text x="923.5" y="739.24" text-anchor="end" font-size="16" fill="#55657a">120t</text><rect x="932" y="703.30" width="1841" height="2" fill="#edeff1"/><text x="923.5" y="709.90" text-anchor="end" font-size="16" fill="#55657a">140t</text><rect x="1235.50" y="874.2" width="2" height="15.4" fill="#e3e6e9"/><text x="1236.50" y="911.0" text-anchor="middle" font-size="16" fill="#55657a">8 Jun</text><rect x="1539.80" y="874.2" width="2" height="15.4" fill="#e3e6e9"/><text x="1540.80" y="911.0" text-anchor="middle" font-size="16" fill="#55657a">17:50</text><rect x="1844.10" y="874.2" width="2" height="15.4" fill="#e3e6e9"/><text x="1845.10" y="911.0" text-anchor="middle" font-size="16" fill="#55657a">17:55</text><rect x="2148.40" y="874.2" width="2" height="15.4" fill="#e3e6e9"/><text x="2149.40" y="911.0" text-anchor="middle" font-size="16" fill="#55657a">18:00</text><rect x="2452.70" y="874.2" width="2" height="15.4" fill="#e3e6e9"/><text x="2453.70" y="911.0" text-anchor="middle" font-size="16" fill="#55657a">18:05</text><rect x="2757.00" y="874.2" width="2" height="15.4" fill="#e3e6e9"/><text x="2758.00" y="911.0" text-anchor="middle" font-size="16" fill="#55657a">18:10</text><path d="M947.50,808.75 L962.71,857.31 L977.93,805.82 L993.14,855.11 L1008.35,800.83 L1023.57,852.32 L1038.78,796.87 L1053.99,850.12 L1069.20,792.32 L1084.42,846.01 L1099.63,789.68 L1114.84,847.63 L1130.06,791.15 L1145.27,848.80 L1160.48,793.49 L1175.69,847.63 L1190.91,788.07 L1206.12,846.75 L1221.33,793.05 L1236.55,849.39 L1251.76,788.51 L1266.97,846.01 L1282.19,784.40 L1297.40,843.81 L1312.61,781.02 L1327.83,842.64 L1343.04,780.14 L1358.25,842.20 L1373.46,778.24 L1388.68,841.17 L1403.89,777.94 L1419.10,841.17 L1434.32,775.30 L1449.53,840.44 L1464.74,775.30 L1479.95,839.85 L1495.17,773.54 L1510.38,839.85 L1525.59,773.98 L1540.81,840.44 L1556.02,773.10 L1571.23,839.41 L1586.45,770.61 L1601.66,838.24 L1616.87,767.97 L1632.09,837.21 L1647.30,767.97 L1662.51,836.04 L1677.72,763.57 L1692.94,835.01 L1708.15,766.21 L1723.36,835.45 L1738.58,763.57 L1753.79,834.57 L1769.00,761.66 L1784.21,833.84 L1799.43,761.22 L1814.64,833.84 L1829.85,761.22 L1845.07,833.25 L1860.28,757.41 L1875.49,831.64 L1890.71,753.74 L1905.92,830.17 L1921.13,752.42 L1936.34,829.00 L1951.56,753.74 L1966.77,830.17 L1981.98,750.80 L1997.20,828.41 L2012.41,748.16 L2027.62,827.97 L2042.84,746.70 L2058.05,826.21 L2073.26,745.38 L2088.47,826.21 L2103.69,746.70 L2118.90,826.21 L2134.11,743.32 L2149.33,825.47 L2164.54,739.51 L2179.75,822.83 L2194.97,737.89 L2210.18,822.83 L2225.39,736.13 L2240.61,821.37 L2255.82,733.35 L2271.03,820.05 L2286.24,733.93 L2301.46,820.05 L2316.67,732.47 L2331.88,820.05 L2347.10,729.09 L2362.31,816.23 L2377.52,725.13 L2392.73,815.79 L2407.95,724.54 L2423.16,815.06 L2438.37,725.42 L2453.59,815.79 L2468.80,723.52 L2484.01,815.21 L2499.23,722.20 L2514.44,814.33 L2529.65,719.70 L2544.86,813.00 L2560.08,717.50 L2575.29,812.12 L2590.50,715.60 L2605.72,811.10 L2620.93,714.13 L2636.14,811.10 L2651.36,714.13 L2666.57,810.22 L2681.78,711.78 L2696.99,809.63 L2712.21,709.43 L2727.42,808.31 L2742.63,706.79 L2757.85,805.82 L2773.06,711.78" fill="none" stroke="#1c7a41" stroke-width="1.65" stroke-linejoin="round"/><g fill="#1c7a41"><circle cx="947.50" cy="808.75" r="1.8"/><circle cx="962.71" cy="857.31" r="1.8"/><circle cx="977.93" cy="805.82" r="1.8"/><circle cx="993.14" cy="855.11" r="1.8"/><circle cx="1008.35" cy="800.83" r="1.8"/><circle cx="1023.57" cy="852.32" r="1.8"/><circle cx="1038.78" cy="796.87" r="1.8"/><circle cx="1053.99" cy="850.12" r="1.8"/><circle cx="1069.20" cy="792.32" r="1.8"/><circle cx="1084.42" cy="846.01" r="1.8"/><circle cx="1099.63" cy="789.68" r="1.8"/><circle cx="1114.84" cy="847.63" r="1.8"/><circle cx="1130.06" cy="791.15" r="1.8"/><circle cx="1145.27" cy="848.80" r="1.8"/><circle cx="1160.48" cy="793.49" r="1.8"/><circle cx="1175.69" cy="847.63" r="1.8"/><circle cx="1190.91" cy="788.07" r="1.8"/><circle cx="1206.12" cy="846.75" r="1.8"/><circle cx="1221.33" cy="793.05" r="1.8"/><circle cx="1236.55" cy="849.39" r="1.8"/><circle cx="1251.76" cy="788.51" r="1.8"/><circle cx="1266.97" cy="846.01" r="1.8"/><circle cx="1282.19" cy="784.40" r="1.8"/><circle cx="1297.40" cy="843.81" r="1.8"/><circle cx="1312.61" cy="781.02" r="1.8"/><circle cx="1327.83" cy="842.64" r="1.8"/><circle cx="1343.04" cy="780.14" r="1.8"/><circle cx="1358.25" cy="842.20" r="1.8"/><circle cx="1373.46" cy="778.24" r="1.8"/><circle cx="1388.68" cy="841.17" r="1.8"/><circle cx="1403.89" cy="777.94" r="1.8"/><circle cx="1419.10" cy="841.17" r="1.8"/><circle cx="1434.32" cy="775.30" r="1.8"/><circle cx="1449.53" cy="840.44" r="1.8"/><circle cx="1464.74" cy="775.30" r="1.8"/><circle cx="1479.95" cy="839.85" r="1.8"/><circle cx="1495.17" cy="773.54" r="1.8"/><circle cx="1510.38" cy="839.85" r="1.8"/><circle cx="1525.59" cy="773.98" r="1.8"/><circle cx="1540.81" cy="840.44" r="1.8"/><circle cx="1556.02" cy="773.10" r="1.8"/><circle cx="1571.23" cy="839.41" r="1.8"/><circle cx="1586.45" cy="770.61" r="1.8"/><circle cx="1601.66" cy="838.24" r="1.8"/><circle cx="1616.87" cy="767.97" r="1.8"/><circle cx="1632.09" cy="837.21" r="1.8"/><circle cx="1647.30" cy="767.97" r="1.8"/><circle cx="1662.51" cy="836.04" r="1.8"/><circle cx="1677.72" cy="763.57" r="1.8"/><circle cx="1692.94" cy="835.01" r="1.8"/><circle cx="1708.15" cy="766.21" r="1.8"/><circle cx="1723.36" cy="835.45" r="1.8"/><circle cx="1738.58" cy="763.57" r="1.8"/><circle cx="1753.79" cy="834.57" r="1.8"/><circle cx="1769.00" cy="761.66" r="1.8"/><circle cx="1784.21" cy="833.84" r="1.8"/><circle cx="1799.43" cy="761.22" r="1.8"/><circle cx="1814.64" cy="833.84" r="1.8"/><circle cx="1829.85" cy="761.22" r="1.8"/><circle cx="1845.07" cy="833.25" r="1.8"/><circle cx="1860.28" cy="757.41" r="1.8"/><circle cx="1875.49" cy="831.64" r="1.8"/><circle cx="1890.71" cy="753.74" r="1.8"/><circle cx="1905.92" cy="830.17" r="1.8"/><circle cx="1921.13" cy="752.42" r="1.8"/><circle cx="1936.34" cy="829.00" r="1.8"/><circle cx="1951.56" cy="753.74" r="1.8"/><circle cx="1966.77" cy="830.17" r="1.8"/><circle cx="1981.98" cy="750.80" r="1.8"/><circle cx="1997.20" cy="828.41" r="1.8"/><circle cx="2012.41" cy="748.16" r="1.8"/><circle cx="2027.62" cy="827.97" r="1.8"/><circle cx="2042.84" cy="746.70" r="1.8"/><circle cx="2058.05" cy="826.21" r="1.8"/><circle cx="2073.26" cy="745.38" r="1.8"/><circle cx="2088.47" cy="826.21" r="1.8"/><circle cx="2103.69" cy="746.70" r="1.8"/><circle cx="2118.90" cy="826.21" r="1.8"/><circle cx="2134.11" cy="743.32" r="1.8"/><circle cx="2149.33" cy="825.47" r="1.8"/><circle cx="2164.54" cy="739.51" r="1.8"/><circle cx="2179.75" cy="822.83" r="1.8"/><circle cx="2194.97" cy="737.89" r="1.8"/><circle cx="2210.18" cy="822.83" r="1.8"/><circle cx="2225.39" cy="736.13" r="1.8"/><circle cx="2240.61" cy="821.37" r="1.8"/><circle cx="2255.82" cy="733.35" r="1.8"/><circle cx="2271.03" cy="820.05" r="1.8"/><circle cx="2286.24" cy="733.93" r="1.8"/><circle cx="2301.46" cy="820.05" r="1.8"/><circle cx="2316.67" cy="732.47" r="1.8"/><circle cx="2331.88" cy="820.05" r="1.8"/><circle cx="2347.10" cy="729.09" r="1.8"/><circle cx="2362.31" cy="816.23" r="1.8"/><circle cx="2377.52" cy="725.13" r="1.8"/><circle cx="2392.73" cy="815.79" r="1.8"/><circle cx="2407.95" cy="724.54" r="1.8"/><circle cx="2423.16" cy="815.06" r="1.8"/><circle cx="2438.37" cy="725.42" r="1.8"/><circle cx="2453.59" cy="815.79" r="1.8"/><circle cx="2468.80" cy="723.52" r="1.8"/><circle cx="2484.01" cy="815.21" r="1.8"/><circle cx="2499.23" cy="722.20" r="1.8"/><circle cx="2514.44" cy="814.33" r="1.8"/><circle cx="2529.65" cy="719.70" r="1.8"/><circle cx="2544.86" cy="813.00" r="1.8"/><circle cx="2560.08" cy="717.50" r="1.8"/><circle cx="2575.29" cy="812.12" r="1.8"/><circle cx="2590.50" cy="715.60" r="1.8"/><circle cx="2605.72" cy="811.10" r="1.8"/><circle cx="2620.93" cy="714.13" r="1.8"/><circle cx="2636.14" cy="811.10" r="1.8"/><circle cx="2651.36" cy="714.13" r="1.8"/><circle cx="2666.57" cy="810.22" r="1.8"/><circle cx="2681.78" cy="711.78" r="1.8"/><circle cx="2696.99" cy="809.63" r="1.8"/><circle cx="2712.21" cy="709.43" r="1.8"/><circle cx="2727.42" cy="808.31" r="1.8"/><circle cx="2742.63" cy="706.79" r="1.8"/><circle cx="2757.85" cy="805.82" r="1.8"/><circle cx="2773.06" cy="711.78" r="1.8"/></g></svg>
<div class="t" style="left:832.00px;top:1043.83px;font-size:20.4px;line-height:22.79px;color:#1e2a3b;font-family:'Liberation Sans', sans-serif;font-weight:700;">Sum(source.bytes)</div>
<svg style="left:0;top:0" width="2876" height="1644" viewBox="0 0 2876 1644" font-family="Liberation Sans, sans-serif"><rect x="932" y="1266.70" width="1841" height="2" fill="#edeff1"/><text x="923.5" y="1273.30" text-anchor="end" font-size="16" fill="#55657a">40m</text><rect x="932" y="1232.65" width="1841" height="2" fill="#edeff1"/><text x="923.5" y="1239.25" text-anchor="end" font-size="16" fill="#55657a">60m</text><rect x="932" y="1198.60" width="1841" height="2" fill="#edeff1"/><text x="923.5" y="1205.20" text-anchor="end" font-size="16" fill="#55657a">80m</text><rect x="932" y="1164.55" width="1841" height="2" fill="#edeff1"/><text x="923.5" y="1171.15" text-anchor="end" font-size="16" fill="#55657a">100m</text><rect x="932" y="1130.50" width="1841" height="2" fill="#edeff1"/><text x="923.5" y="1137.10" text-anchor="end" font-size="16" fill="#55657a">120m</text><rect x="932" y="1096.45" width="1841" height="2" fill="#edeff1"/><text x="923.5" y="1103.05" text-anchor="end" font-size="16" fill="#55657a">140m</text><rect x="1235.50" y="1272.0" width="2" height="15.4" fill="#e3e6e9"/><text x="1236.50" y="1308.6" text-anchor="middle" font-size="16" fill="#55657a">8 Jun</text><rect x="1539.80" y="1272.0" width="2" height="15.4" fill="#e3e6e9"/><text x="1540.80" y="1308.6" text-anchor="middle" font-size="16" fill="#55657a">17:50</text><rect x="1844.10" y="1272.0" width="2" height="15.4" fill="#e3e6e9"/><text x="1845.10" y="1308.6" text-anchor="middle" font-size="16" fill="#55657a">17:55</text><rect x="2148.40" y="1272.0" width="2" height="15.4" fill="#e3e6e9"/><text x="2149.40" y="1308.6" text-anchor="middle" font-size="16" fill="#55657a">18:00</text><rect x="2452.70" y="1272.0" width="2" height="15.4" fill="#e3e6e9"/><text x="2453.70" y="1308.6" text-anchor="middle" font-size="16" fill="#55657a">18:05</text><rect x="2757.00" y="1272.0" width="2" height="15.4" fill="#e3e6e9"/><text x="2758.00" y="1308.6" text-anchor="middle" font-size="16" fill="#55657a">18:10</text><path d="M947.50,1176.79 L962.71,1256.12 L977.93,1175.25 L993.14,1254.93 L1008.35,1173.89 L1023.57,1253.91 L1038.78,1169.47 L1053.99,1252.21 L1069.20,1167.25 L1084.42,1250.50 L1099.63,1165.38 L1114.84,1249.82 L1130.06,1163.85 L1145.27,1249.82 L1160.48,1163.17 L1175.69,1248.80 L1190.91,1161.63 L1206.12,1248.12 L1221.33,1160.95 L1236.55,1247.10 L1251.76,1158.57 L1266.97,1246.42 L1282.19,1156.02 L1297.40,1244.89 L1312.61,1154.14 L1327.83,1244.21 L1343.04,1152.27 L1358.25,1243.18 L1373.46,1150.23 L1388.68,1242.50 L1403.89,1151.76 L1419.10,1242.50 L1434.32,1148.01 L1449.53,1240.97 L1464.74,1145.29 L1479.95,1239.78 L1495.17,1145.29 L1510.38,1239.78 L1525.59,1144.10 L1540.81,1238.42 L1556.02,1143.08 L1571.23,1239.10 L1586.45,1142.06 L1601.66,1238.08 L1616.87,1140.69 L1632.09,1237.57 L1647.30,1138.82 L1662.51,1236.54 L1677.72,1137.46 L1692.94,1235.86 L1708.15,1138.14 L1723.36,1236.54 L1738.58,1137.46 L1753.79,1235.86 L1769.00,1135.93 L1784.21,1234.67 L1799.43,1134.73 L1814.64,1234.16 L1829.85,1133.71 L1845.07,1234.16 L1860.28,1132.18 L1875.49,1233.65 L1890.71,1131.50 L1905.92,1233.65 L1921.13,1130.31 L1936.34,1232.97 L1951.56,1129.29 L1966.77,1231.95 L1981.98,1128.61 L1997.20,1231.95 L2012.41,1128.61 L2027.62,1231.95 L2042.84,1127.75 L2058.05,1231.10 L2073.26,1127.07 L2088.47,1231.10 L2103.69,1126.05 L2118.90,1230.42 L2134.11,1124.86 L2149.33,1229.73 L2164.54,1123.84 L2179.75,1229.73 L2194.97,1123.16 L2210.18,1228.88 L2225.39,1122.31 L2240.61,1228.88 L2255.82,1121.11 L2271.03,1228.20 L2286.24,1121.11 L2301.46,1227.69 L2316.67,1119.41 L2331.88,1227.01 L2347.10,1117.71 L2362.31,1225.48 L2377.52,1115.67 L2392.73,1225.48 L2407.95,1115.84 L2423.16,1225.82 L2438.37,1114.82 L2453.59,1225.14 L2468.80,1114.30 L2484.01,1225.31 L2499.23,1111.75 L2514.44,1223.78 L2529.65,1109.37 L2544.86,1222.75 L2560.08,1110.73 L2575.29,1222.75 L2590.50,1108.69 L2605.72,1221.90 L2620.93,1108.69 L2636.14,1221.90 L2651.36,1108.01 L2666.57,1221.90 L2681.78,1106.98 L2696.99,1221.05 L2712.21,1105.62 L2727.42,1220.20 L2742.63,1102.39 L2757.85,1219.18 L2773.06,1102.73" fill="none" stroke="#1c7a41" stroke-width="1.65" stroke-linejoin="round"/><g fill="#1c7a41"><circle cx="947.50" cy="1176.79" r="1.8"/><circle cx="962.71" cy="1256.12" r="1.8"/><circle cx="977.93" cy="1175.25" r="1.8"/><circle cx="993.14" cy="1254.93" r="1.8"/><circle cx="1008.35" cy="1173.89" r="1.8"/><circle cx="1023.57" cy="1253.91" r="1.8"/><circle cx="1038.78" cy="1169.47" r="1.8"/><circle cx="1053.99" cy="1252.21" r="1.8"/><circle cx="1069.20" cy="1167.25" r="1.8"/><circle cx="1084.42" cy="1250.50" r="1.8"/><circle cx="1099.63" cy="1165.38" r="1.8"/><circle cx="1114.84" cy="1249.82" r="1.8"/><circle cx="1130.06" cy="1163.85" r="1.8"/><circle cx="1145.27" cy="1249.82" r="1.8"/><circle cx="1160.48" cy="1163.17" r="1.8"/><circle cx="1175.69" cy="1248.80" r="1.8"/><circle cx="1190.91" cy="1161.63" r="1.8"/><circle cx="1206.12" cy="1248.12" r="1.8"/><circle cx="1221.33" cy="1160.95" r="1.8"/><circle cx="1236.55" cy="1247.10" r="1.8"/><circle cx="1251.76" cy="1158.57" r="1.8"/><circle cx="1266.97" cy="1246.42" r="1.8"/><circle cx="1282.19" cy="1156.02" r="1.8"/><circle cx="1297.40" cy="1244.89" r="1.8"/><circle cx="1312.61" cy="1154.14" r="1.8"/><circle cx="1327.83" cy="1244.21" r="1.8"/><circle cx="1343.04" cy="1152.27" r="1.8"/><circle cx="1358.25" cy="1243.18" r="1.8"/><circle cx="1373.46" cy="1150.23" r="1.8"/><circle cx="1388.68" cy="1242.50" r="1.8"/><circle cx="1403.89" cy="1151.76" r="1.8"/><circle cx="1419.10" cy="1242.50" r="1.8"/><circle cx="1434.32" cy="1148.01" r="1.8"/><circle cx="1449.53" cy="1240.97" r="1.8"/><circle cx="1464.74" cy="1145.29" r="1.8"/><circle cx="1479.95" cy="1239.78" r="1.8"/><circle cx="1495.17" cy="1145.29" r="1.8"/><circle cx="1510.38" cy="1239.78" r="1.8"/><circle cx="1525.59" cy="1144.10" r="1.8"/><circle cx="1540.81" cy="1238.42" r="1.8"/><circle cx="1556.02" cy="1143.08" r="1.8"/><circle cx="1571.23" cy="1239.10" r="1.8"/><circle cx="1586.45" cy="1142.06" r="1.8"/><circle cx="1601.66" cy="1238.08" r="1.8"/><circle cx="1616.87" cy="1140.69" r="1.8"/><circle cx="1632.09" cy="1237.57" r="1.8"/><circle cx="1647.30" cy="1138.82" r="1.8"/><circle cx="1662.51" cy="1236.54" r="1.8"/><circle cx="1677.72" cy="1137.46" r="1.8"/><circle cx="1692.94" cy="1235.86" r="1.8"/><circle cx="1708.15" cy="1138.14" r="1.8"/><circle cx="1723.36" cy="1236.54" r="1.8"/><circle cx="1738.58" cy="1137.46" r="1.8"/><circle cx="1753.79" cy="1235.86" r="1.8"/><circle cx="1769.00" cy="1135.93" r="1.8"/><circle cx="1784.21" cy="1234.67" r="1.8"/><circle cx="1799.43" cy="1134.73" r="1.8"/><circle cx="1814.64" cy="1234.16" r="1.8"/><circle cx="1829.85" cy="1133.71" r="1.8"/><circle cx="1845.07" cy="1234.16" r="1.8"/><circle cx="1860.28" cy="1132.18" r="1.8"/><circle cx="1875.49" cy="1233.65" r="1.8"/><circle cx="1890.71" cy="1131.50" r="1.8"/><circle cx="1905.92" cy="1233.65" r="1.8"/><circle cx="1921.13" cy="1130.31" r="1.8"/><circle cx="1936.34" cy="1232.97" r="1.8"/><circle cx="1951.56" cy="1129.29" r="1.8"/><circle cx="1966.77" cy="1231.95" r="1.8"/><circle cx="1981.98" cy="1128.61" r="1.8"/><circle cx="1997.20" cy="1231.95" r="1.8"/><circle cx="2012.41" cy="1128.61" r="1.8"/><circle cx="2027.62" cy="1231.95" r="1.8"/><circle cx="2042.84" cy="1127.75" r="1.8"/><circle cx="2058.05" cy="1231.10" r="1.8"/><circle cx="2073.26" cy="1127.07" r="1.8"/><circle cx="2088.47" cy="1231.10" r="1.8"/><circle cx="2103.69" cy="1126.05" r="1.8"/><circle cx="2118.90" cy="1230.42" r="1.8"/><circle cx="2134.11" cy="1124.86" r="1.8"/><circle cx="2149.33" cy="1229.73" r="1.8"/><circle cx="2164.54" cy="1123.84" r="1.8"/><circle cx="2179.75" cy="1229.73" r="1.8"/><circle cx="2194.97" cy="1123.16" r="1.8"/><circle cx="2210.18" cy="1228.88" r="1.8"/><circle cx="2225.39" cy="1122.31" r="1.8"/><circle cx="2240.61" cy="1228.88" r="1.8"/><circle cx="2255.82" cy="1121.11" r="1.8"/><circle cx="2271.03" cy="1228.20" r="1.8"/><circle cx="2286.24" cy="1121.11" r="1.8"/><circle cx="2301.46" cy="1227.69" r="1.8"/><circle cx="2316.67" cy="1119.41" r="1.8"/><circle cx="2331.88" cy="1227.01" r="1.8"/><circle cx="2347.10" cy="1117.71" r="1.8"/><circle cx="2362.31" cy="1225.48" r="1.8"/><circle cx="2377.52" cy="1115.67" r="1.8"/><circle cx="2392.73" cy="1225.48" r="1.8"/><circle cx="2407.95" cy="1115.84" r="1.8"/><circle cx="2423.16" cy="1225.82" r="1.8"/><circle cx="2438.37" cy="1114.82" r="1.8"/><circle cx="2453.59" cy="1225.14" r="1.8"/><circle cx="2468.80" cy="1114.30" r="1.8"/><circle cx="2484.01" cy="1225.31" r="1.8"/><circle cx="2499.23" cy="1111.75" r="1.8"/><circle cx="2514.44" cy="1223.78" r="1.8"/><circle cx="2529.65" cy="1109.37" r="1.8"/><circle cx="2544.86" cy="1222.75" r="1.8"/><circle cx="2560.08" cy="1110.73" r="1.8"/><circle cx="2575.29" cy="1222.75" r="1.8"/><circle cx="2590.50" cy="1108.69" r="1.8"/><circle cx="2605.72" cy="1221.90" r="1.8"/><circle cx="2620.93" cy="1108.69" r="1.8"/><circle cx="2636.14" cy="1221.90" r="1.8"/><circle cx="2651.36" cy="1108.01" r="1.8"/><circle cx="2666.57" cy="1221.90" r="1.8"/><circle cx="2681.78" cy="1106.98" r="1.8"/><circle cx="2696.99" cy="1221.05" r="1.8"/><circle cx="2712.21" cy="1105.62" r="1.8"/><circle cx="2727.42" cy="1220.20" r="1.8"/><circle cx="2742.63" cy="1102.39" r="1.8"/><circle cx="2757.85" cy="1219.18" r="1.8"/><circle cx="2773.06" cy="1102.73" r="1.8"/></g></svg>
<div class="r" style="left:816px;top:1404px;width:2034px;height:112px;background:#ffffff;border-radius:12px;overflow:hidden;"></div>
<div class="r" style="left:816px;top:1462px;width:2034px;height:54px;background:#fafbfc;border-radius:0 0 12px 12px;"></div>
<div class="r" style="left:816px;top:1460px;width:2034px;height:2px;background:#b9c6cc;"></div>
<div class="r" style="left:858px;top:1462px;width:1px;height:54px;background:#e4e8ea;"></div>
<div class="r" style="left:1600px;top:1404px;width:1px;height:112px;background:#e4e8ea;"></div>
<div class="r" style="left:2260px;top:1404px;width:1px;height:112px;background:#e4e8ea;"></div>
<div class="r" style="left:828px;top:1481px;width:16px;height:16px;background:#1a7a3f;border-radius:2px;"></div>
<div class="t" style="left:929.90px;top:1420.97px;font-size:20.7px;line-height:23.45px;color:#1e2a3b;font-family:'Liberation Mono', monospace;text-align:center;width:600px;">SUM(destination.bytes)</div>
<div class="t" style="left:1630.70px;top:1420.97px;font-size:20.7px;line-height:23.45px;color:#1e2a3b;font-family:'Liberation Mono', monospace;text-align:center;width:600px;">SUM(event.duration)</div>
<div class="t" style="left:2275.40px;top:1420.97px;font-size:20.7px;line-height:23.45px;color:#1e2a3b;font-family:'Liberation Mono', monospace;text-align:center;width:560px;">SUM(source.bytes)</div>
<div class="t" style="left:1187.20px;top:1480.00px;font-size:19.1px;line-height:21.64px;color:#27344a;font-family:'Liberation Mono', monospace;text-align:right;width:400px;">1,628,454,420</div>
<div class="t" style="left:1747.80px;top:1480.00px;font-size:19.1px;line-height:21.64px;color:#27344a;font-family:'Liberation Mono', monospace;text-align:right;width:500px;">9,607,757,026,854,772</div>
<div class="t" style="left:2337.00px;top:1480.00px;font-size:19.1px;line-height:21.64px;color:#27344a;font-family:'Liberation Mono', monospace;text-align:right;width:500px;">10,718,859,015</div>
<div class="t" style="left:816.10px;top:1573.78px;font-size:19.0px;line-height:21.52px;color:#66768a;font-family:'Liberation Mono', monospace;">Examined 55,406 rows (&lt;262ms)</div>
<div class="t" style="left:2149.00px;top:1573.70px;font-size:19.1px;line-height:21.64px;color:#66768a;font-family:'Liberation Mono', monospace;text-align:right;width:700px;">Jun 8, 17:40:27 — Jun 8, 18:10:27 (15 secs resolution)</div>
</body></html>
